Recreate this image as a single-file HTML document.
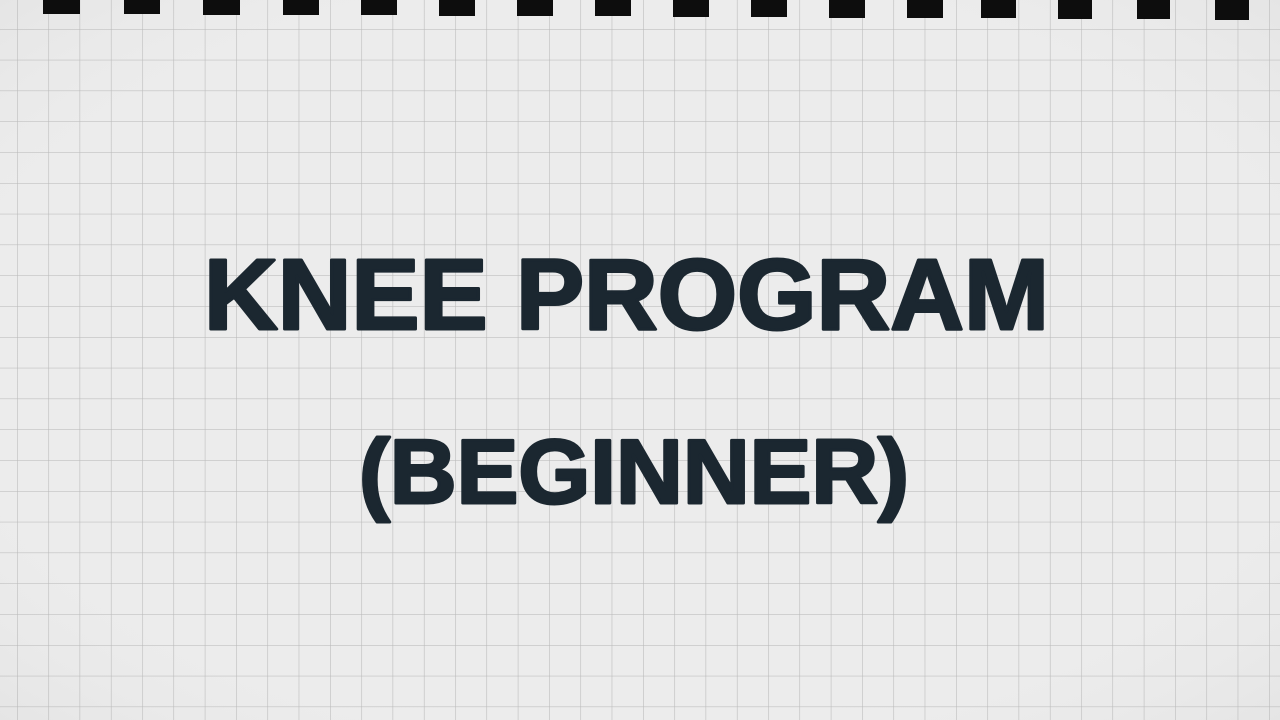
<!DOCTYPE html>
<html><head><style>
html,body{margin:0;padding:0;width:1280px;height:720px;overflow:hidden;background:#e9e9e9}
</style></head><body>
<svg width="1280" height="720" viewBox="0 0 1280 720" xmlns="http://www.w3.org/2000/svg">
<defs>
<pattern id="g" x="17" y="29" width="31.3" height="30.8" patternUnits="userSpaceOnUse">
<rect width="31.3" height="30.8" fill="#ececec"/>
<line x1="0" y1="0" x2="31.3" y2="0" stroke="#b5b5b5" stroke-width="1.1"/>
<line x1="0" y1="0" x2="0" y2="30.8" stroke="#b8b8b8" stroke-width="1.1"/>
</pattern>
<radialGradient id="v" cx="0.5" cy="0.5" r="0.75">
<stop offset="0.6" stop-color="#fff" stop-opacity="0"/>
<stop offset="1" stop-color="#999" stop-opacity="0.12"/>
</radialGradient>
</defs>
<rect width="1280" height="720" fill="url(#g)"/>
<rect width="1280" height="720" fill="url(#v)"/>
<g fill="#0d0d0d">
<rect x="43" y="0" width="37" height="14"/>
<rect x="124" y="0" width="36" height="14"/>
<rect x="203" y="0" width="37" height="15"/>
<rect x="283" y="0" width="36" height="15"/>
<rect x="361" y="0" width="36" height="15"/>
<rect x="439" y="0" width="36" height="16"/>
<rect x="517" y="0" width="36" height="16"/>
<rect x="595" y="0" width="36" height="16"/>
<rect x="673" y="0" width="36" height="17"/>
<rect x="751" y="0" width="36" height="17"/>
<rect x="829" y="0" width="36" height="18"/>
<rect x="907" y="0" width="36" height="18"/>
<rect x="981" y="0" width="35" height="18"/>
<rect x="1058" y="0" width="34" height="19"/>
<rect x="1137" y="0" width="33" height="19"/>
<rect x="1215" y="0" width="34" height="20"/>
</g>
<g font-family="'Liberation Sans',sans-serif" font-weight="bold" fill="#1b2730" stroke="#1b2730" stroke-width="3" stroke-linejoin="round">
<text x="204" y="329" font-size="100" textLength="845" lengthAdjust="spacingAndGlyphs">KNEE PROGRAM</text>
<text x="359" y="503" font-size="91" textLength="550" lengthAdjust="spacingAndGlyphs">(BEGINNER)</text>
</g>
</svg>
</body></html>
